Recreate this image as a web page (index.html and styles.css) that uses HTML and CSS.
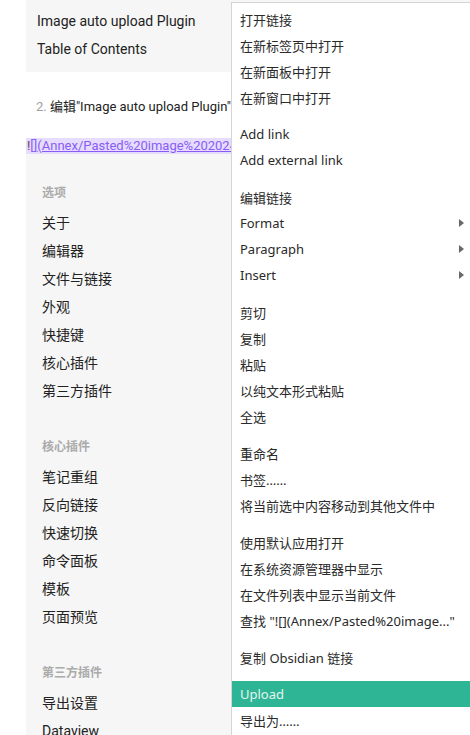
FILE: index.html
```html
<!DOCTYPE html>
<html lang="zh-CN">
<head>
    <meta charset="UTF-8">
    <meta name="viewport" content="width=device-width, initial-scale=1.0">
    <title>Obsidian</title>
    <link rel="stylesheet" href="styles.css">
</head>
<body>
    <div class="page">
        <div class="toc">
            <div class="toc-line">Image auto upload Plugin</div>
            <div class="toc-line">Table of Contents</div>
        </div>

        <div class="note">
            <div class="step"><span class="step-num">2.</span> 编辑"Image auto upload Plugin"</div>
            <div class="link-row">
                <span class="bang">!</span><span class="brackets">[]</span><span class="link-url">(Annex/Pasted%20image%202024.png)</span>
            </div>
        </div>

        <div class="settings">
            <div class="nav-group">
                <div class="nav-title">选项</div>
                <div class="nav-item">关于</div>
                <div class="nav-item">编辑器</div>
                <div class="nav-item">文件与链接</div>
                <div class="nav-item">外观</div>
                <div class="nav-item">快捷键</div>
                <div class="nav-item">核心插件</div>
                <div class="nav-item">第三方插件</div>
            </div>
            <div class="nav-group">
                <div class="nav-title">核心插件</div>
                <div class="nav-item">笔记重组</div>
                <div class="nav-item">反向链接</div>
                <div class="nav-item">快速切换</div>
                <div class="nav-item">命令面板</div>
                <div class="nav-item">模板</div>
                <div class="nav-item">页面预览</div>
            </div>
            <div class="nav-group">
                <div class="nav-title">第三方插件</div>
                <div class="nav-item">导出设置</div>
                <div class="nav-item">Dataview</div>
            </div>
        </div>
    </div>

    <div class="menu">
        <div class="menu-item">打开链接</div>
        <div class="menu-item">在新标签页中打开</div>
        <div class="menu-item">在新面板中打开</div>
        <div class="menu-item">在新窗口中打开</div>
        <div class="menu-sep"></div>
        <div class="menu-item">Add link</div>
        <div class="menu-item">Add external link</div>
        <div class="menu-sep"></div>
        <div class="menu-item">编辑链接</div>
        <div class="menu-item">Format <span class="arrow"></span></div>
        <div class="menu-item">Paragraph <span class="arrow"></span></div>
        <div class="menu-item">Insert <span class="arrow"></span></div>
        <div class="menu-sep"></div>
        <div class="menu-item">剪切</div>
        <div class="menu-item">复制</div>
        <div class="menu-item">粘贴</div>
        <div class="menu-item">以纯文本形式粘贴</div>
        <div class="menu-item">全选</div>
        <div class="menu-sep"></div>
        <div class="menu-item">重命名</div>
        <div class="menu-item">书签……</div>
        <div class="menu-item">将当前选中内容移动到其他文件中</div>
        <div class="menu-sep"></div>
        <div class="menu-item">使用默认应用打开</div>
        <div class="menu-item">在系统资源管理器中显示</div>
        <div class="menu-item">在文件列表中显示当前文件</div>
        <div class="menu-item">查找 "![](Annex/Pasted%20image..."</div>
        <div class="menu-sep"></div>
        <div class="menu-item">复制 Obsidian 链接</div>
        <div class="menu-sep"></div>
        <div class="menu-item selected">Upload</div>
        <div class="menu-item">导出为……</div>
    </div>
</body>
</html>
```

FILE: styles.css
```css
* {
    box-sizing: border-box;
}

body {
    margin: 0;
    height: 735px;
    overflow: hidden;
    background: #ffffff;
    color: #222222;
    font-family: Roboto, "Noto Sans CJK SC", sans-serif;
}

.page {
    padding-left: 26px;
}

.toc {
    background-color: #f6f6f6;
    height: 72px;
    padding: 7px 11px 0;
    font-size: 14px;
}

.toc-line {
    line-height: 28px;
}

.note {
    padding-top: 25px;
}

.step {
    padding-left: 10px;
    font-size: 13px;
    line-height: 20px;
    white-space: nowrap;
}

.step-num {
    color: #a0a0a0;
}

.link-row {
    margin-top: 21px;
    height: 16px;
    background-color: #e6dcfd;
    font-size: 13px;
    line-height: 16px;
    white-space: nowrap;
}

.bang {
    color: #5a4b3e;
    padding-left: 1px;
}

.brackets {
    color: #8a5cf5;
}

.link-url {
    color: #8a5cf5;
    text-decoration: underline;
}

.settings {
    width: 206px;
    height: 600px;
    background-color: #f6f6f6;
    border-right: 1px solid #d8d8d8;
    padding-left: 16px;
}

.nav-group {
    padding-top: 32px;
}

.nav-group:first-child {
    padding-top: 29px;
}

.nav-title {
    font-size: 12px;
    font-weight: 600;
    line-height: 20px;
    color: #ababab;
    margin-bottom: 6px;
}

.nav-item {
    font-size: 14px;
    line-height: 28px;
    color: #222222;
}

/* context menu over the page */
.menu {
    position: absolute;
    top: 2px;
    left: 231px;
    right: 0;
    bottom: 0;
    background: #ffffff;
    border-top: 1px solid #d5d5d5;
    border-left: 1px solid #d5d5d5;
    padding-top: 3px;
    font-family: "Noto Sans", "Noto Sans CJK SC", sans-serif;
    font-size: 13px;
    color: #2a2a2a;
    overflow: hidden;
}

.menu-item {
    display: flex;
    justify-content: space-between;
    align-items: center;
    height: 26px;
    padding: 0 6px 0 8px;
    white-space: nowrap;
}

.menu-item.selected {
    background-color: #2eb596;
    color: #e4f6f0;
}

.menu-sep {
    height: 11px;
}

.arrow {
    width: 0;
    height: 0;
    border-top: 4px solid transparent;
    border-bottom: 4px solid transparent;
    border-left: 5px solid #666a6d;
}
```
